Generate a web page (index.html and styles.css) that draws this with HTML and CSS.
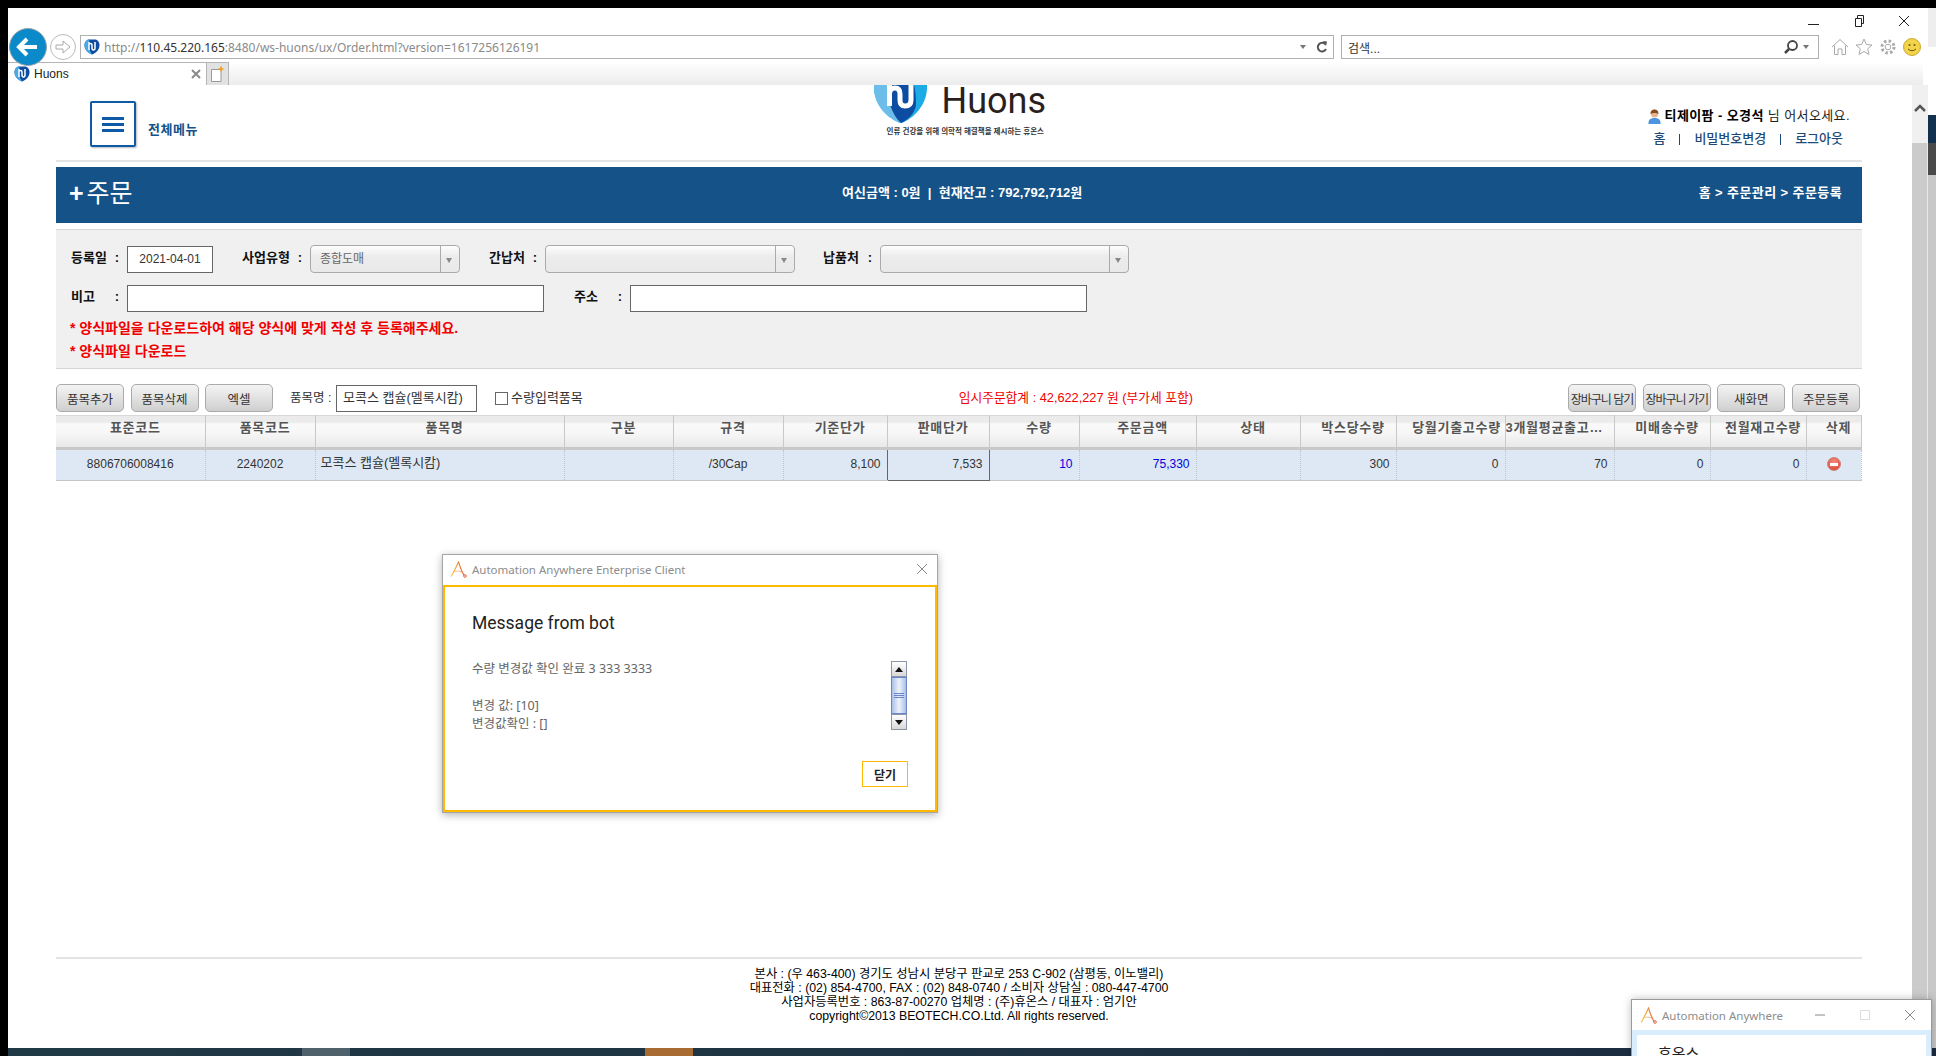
FILE: index.html
```html
<!DOCTYPE html>
<html lang="ko">
<head>
    <meta charset="UTF-8">
    <title>Huons</title>
    <link rel="stylesheet" href="styles.css">
</head>
<body>
<div class="browser">
    <div class="chrome">
        <div class="win-row">
            <svg class="win-btn" width="14" height="14" viewBox="0 0 14 14"><path d="M1 10.5H12" stroke="#222" fill="none"/></svg>
            <svg class="win-btn" width="14" height="14" viewBox="0 0 14 14"><path d="M3.5 4.5H9.5V12.5H3.5ZM5.5 4.5V1.5H11.5V9.5H9.5" stroke="#222" fill="none"/></svg>
            <svg class="win-btn" width="14" height="14" viewBox="0 0 14 14"><path d="M2 2L12 12M12 2L2 12" stroke="#222" fill="none"/></svg>
        </div>
        <div class="addr-row">
            <svg class="back" width="38" height="38" viewBox="0 0 38 38"><circle cx="19" cy="19" r="18.5" fill="#0b8ac9" stroke="#9aa5ab"/><path d="M28 19H11M18 11L10 19L18 27" stroke="#fff" stroke-width="4" fill="none"/></svg>
            <svg class="forward" width="26" height="26" viewBox="0 0 26 26"><circle cx="13" cy="13" r="12.5" fill="#fff" stroke="#bbb"/><path d="M6 11H13V7L20 13L13 19V15H6Z" fill="none" stroke="#aaa"/></svg>
            <div class="addr-box">
                <svg class="favicon" width="16" height="16" viewBox="0 0 16 16"><path d="M8 15.5C3 13.5 .5 10 .5 6C.5 2.5 3 .5 5.5 .5H10.5C13 .5 15.5 2.5 15.5 6C15.5 10 13 13.5 8 15.5Z" fill="#0c4da2"/><path d="M.5 6C.5 10 3 13.5 8 15.5C5 11 4 6 5.5 .5C3 .5 .5 2.5 .5 6Z" fill="#4aa9e6"/><path d="M5 3V11M5 6Q5 4.5 6.5 4.5Q8 4.5 8 6V9Q8 11 9.5 11Q11 11 11 9V3" stroke="#fff" stroke-width="1.5" fill="none"/></svg>
                <span class="url"><span class="url-dim">http://</span>110.45.220.165<span class="url-dim">:8480/ws-huons/ux/Order.html?version=1617256126191</span></span>
                <span class="drop-arrow"></span>
                <svg class="refresh" width="12" height="14" viewBox="0 0 12 14"><path d="M9.5 4.5A4.3 4.3 0 1 0 10 9" stroke="#555" stroke-width="2" fill="none"/><path d="M7 1L11 1.5L10 6Z" fill="#555"/></svg>
            </div>
            <div class="search-box">
                <span class="search-text">검색...</span>
                <svg width="16" height="16" viewBox="0 0 16 16"><circle cx="9.5" cy="6.5" r="4.5" fill="none" stroke="#444" stroke-width="1.8"/><path d="M6 10L2 14" stroke="#444" stroke-width="2.5"/></svg>
                <span class="drop-arrow"></span>
            </div>
            <div class="tool-icons">
                <svg width="18" height="18" viewBox="0 0 18 18"><path d="M1 9L9 1.5L17 9M3.5 7.5V16.5H7V11H11V16.5H14.5V7.5" fill="none" stroke="#a9a9a9"/></svg>
                <svg width="18" height="18" viewBox="0 0 18 18"><path d="M9 1L11.3 6.5L17 7L12.7 10.8L14 16.5L9 13.5L4 16.5L5.3 10.8L1 7L6.7 6.5Z" fill="none" stroke="#a9a9a9"/></svg>
                <svg width="18" height="18" viewBox="0 0 18 18"><circle cx="9" cy="9" r="2.8" fill="none" stroke="#a9a9a9"/><circle cx="9" cy="9" r="6" fill="none" stroke="#a9a9a9" stroke-width="3" stroke-dasharray="2.4 2.3"/></svg>
                <svg width="18" height="18" viewBox="0 0 18 18"><circle cx="9" cy="9" r="8.5" fill="#f3d34a" stroke="#c9a92e"/><circle cx="6.5" cy="7" r="1" fill="#6d5a14"/><circle cx="11.5" cy="7" r="1" fill="#6d5a14"/><path d="M5 11Q9 14.5 13 11" stroke="#6d5a14" fill="none"/></svg>
            </div>
        </div>
        <div class="tab-row">
            <div class="tab">
                <svg class="tab-icon" width="16" height="16" viewBox="0 0 16 16"><path d="M8 15.5C3 13.5 .5 10 .5 6C.5 2.5 3 .5 5.5 .5H10.5C13 .5 15.5 2.5 15.5 6C15.5 10 13 13.5 8 15.5Z" fill="#0c4da2"/><path d="M.5 6C.5 10 3 13.5 8 15.5C5 11 4 6 5.5 .5C3 .5 .5 2.5 .5 6Z" fill="#4aa9e6"/><path d="M5 3V11M5 6Q5 4.5 6.5 4.5Q8 4.5 8 6V9Q8 11 9.5 11Q11 11 11 9V3" stroke="#fff" stroke-width="1.5" fill="none"/></svg>
                <span class="tab-title">Huons</span>
                <svg width="10" height="10" viewBox="0 0 10 10"><path d="M1 1L9 9M9 1L1 9" stroke="#8a8a8a" stroke-width="2"/></svg>
            </div>
            <div class="new-tab">
                <svg width="16" height="18" viewBox="0 0 16 18"><path d="M1.5 4.5H11V16.5H1.5Z" fill="#fff" stroke="#9a9a9a"/><path d="M11 .5L12 3L14.5 4L12 5L11 7.5L10 5L7.5 4L10 3Z" fill="#f0a020"/></svg>
            </div>
            <div class="tab-rest"></div>
        </div>
    </div>

    <div class="viewport">
        <div class="page">
            <div class="page-body">
                <div class="top-header">
                    <div class="menu-area">
                        <div class="menu-box"><i></i><i></i><i></i></div>
                        <span class="menu-label">전체메뉴</span>
                    </div>
                    <div class="logo">
                        <div class="logo-top">
                            <svg width="53" height="38" viewBox="0 0 53 38">
                                <path d="M0 0C-1 18 12 33 27 38C41 33 54 18 53 0Z" fill="#1cabe5"/>
                                <path d="M0 0C-1 18 12 33 27 38C20 30 14 16 13 0Z" fill="#6cbdea"/>
                                <path d="M13 0C13 14 18 30 27 38C34 35 41 28 42 20C42 10 41 4 40 0Z" fill="#0c4da2"/>
                                <path d="M15.5 0V21M15.5 9Q15.5 3 21 3Q26 3 26 9V15Q26 21 31 21Q37 21 37 15V0" stroke="#fff" stroke-width="5" fill="none"/>
                            </svg>
                            <span class="logo-word">Huons</span>
                        </div>
                        <div class="logo-tag">인류 건강을 위해 의학적 해결책을 제시하는 휴온스</div>
                    </div>
                    <div class="user-area">
                        <div class="user-line">
                            <svg width="15" height="15" viewBox="0 0 15 15"><path d="M1.5 15C1 10.5 4 9 7.5 9C11 9 14 10.5 13.5 15Z" fill="#4f94e0"/><circle cx="7.5" cy="5" r="3.5" fill="#e8b48c"/><path d="M3.5 5C3.5 1.5 5.5 .5 7.5 .5C9.5 .5 11.5 1.5 11.5 5C10 3.5 5 3.5 3.5 5Z" fill="#8a4a22"/></svg>
                            <span><b>티제이팜 - 오경석</b> 님 어서오세요.</span>
                        </div>
                        <div class="user-links"><a>홈</a><s></s><a>비밀번호변경</a><s></s><a>로그아웃</a></div>
                    </div>
                </div>

                <div class="title-band">
                    <h1 class="band-title"><span class="band-plus">+</span>주문</h1>
                    <div class="band-info">여신금액 : 0원 &nbsp;|&nbsp; 현재잔고 : 792,792,712원</div>
                    <div class="band-crumb">홈 &gt; 주문관리 &gt; 주문등록</div>
                </div>

                <div class="search-panel">
                    <div class="form-row">
                        <label class="field-label"><span>등록일</span><span>:</span></label>
                        <div class="text-input date-input">2021-04-01</div>
                        <label class="field-label label-wide gap-l"><span>사업유형</span><span>:</span></label>
                        <div class="combo combo-s"><span>종합도매</span><em></em></div>
                        <label class="field-label gap-l"><span>간납처</span><span>:</span></label>
                        <div class="combo combo-m"><span></span><em></em></div>
                        <label class="field-label label-n gap-n"><span>납품처</span><span>:</span></label>
                        <div class="combo combo-m combo-l"><span></span><em></em></div>
                    </div>
                    <div class="form-row row-two">
                        <label class="field-label"><span>비고</span><span>:</span></label>
                        <div class="text-input memo-input"></div>
                        <label class="field-label gap-addr"><span>주소</span><span>:</span></label>
                        <div class="text-input addr-input"></div>
                    </div>
                    <p class="notice notice-first">* 양식파일을 다운로드하여 해당 양식에 맞게 작성 후 등록해주세요.</p>
                    <p class="notice">* 양식파일 다운로드</p>
                </div>

                <div class="toolbar">
                    <button class="btn">품목추가</button>
                    <button class="btn">품목삭제</button>
                    <button class="btn">엑셀</button>
                    <span class="item-label">품목명 :</span>
                    <div class="text-input item-input">모콕스 캡슐(멜록시캄)</div>
                    <span class="check-box"></span>
                    <span class="check-label">수량입력품목</span>
                    <span class="order-total">임시주문합계 : 42,622,227 원 (부가세 포함)</span>
                    <div class="btn-group">
                        <button class="btn btn-narrow">장바구니 담기</button>
                        <button class="btn btn-narrow">장바구니 가기</button>
                        <button class="btn">새화면</button>
                        <button class="btn">주문등록</button>
                    </div>
                </div>

                <table class="grid">
                    <colgroup>
                        <col class="c149"><col class="c110"><col class="c249"><col class="c109"><col class="c110"><col class="c104"><col class="c102"><col class="c90"><col class="c117"><col class="c104"><col class="c96"><col class="c109"><col class="c109"><col class="c96"><col class="c96"><col class="c55">
                    </colgroup>
                    <thead>
                    <tr>
                        <th>표준코드</th><th>품목코드</th><th>품목명</th><th>구분</th><th>규격</th><th>기준단가</th><th>판매단가</th><th>수량</th><th>주문금액</th><th>상태</th><th>박스당수량</th><th class="th-tight">당월기출고수량</th><th class="th-clip">3개월평균출고수량</th><th>미배송수량</th><th>전월재고수량</th><th>삭제</th>
                    </tr>
                    </thead>
                    <tbody>
                    <tr>
                        <td class="mid">8806706008416</td>
                        <td class="mid">2240202</td>
                        <td class="left">모콕스 캡슐(멜록시캄)</td>
                        <td></td>
                        <td class="mid">/30Cap</td>
                        <td class="num">8,100</td>
                        <td class="num cell-focus">7,533</td>
                        <td class="num blue">10</td>
                        <td class="num blue">75,330</td>
                        <td></td>
                        <td class="num">300</td>
                        <td class="num">0</td>
                        <td class="num">70</td>
                        <td class="num">0</td>
                        <td class="num">0</td>
                        <td class="mid"><span class="del-icon"></span></td>
                    </tr>
                    </tbody>
                </table>

                <div class="footer">
                    본사 : (우 463-400) 경기도 성남시 분당구 판교로 253 C-902 (삼평동, 이노밸리)<br>
                    대표전화 : (02) 854-4700, FAX : (02) 848-0740 / 소비자 상담실 : 080-447-4700<br>
                    사업자등록번호 : 863-87-00270 업체명 : (주)휴온스 / 대표자 : 엄기안<br>
                    copyright©2013 BEOTECH.CO.Ltd. All rights reserved.
                </div>
            </div>
            <div class="taskbar"><span class="task-a"></span><span class="task-b"></span></div>
        </div>
        <div class="scrollbar">
            <div class="scroll-top">
                <svg width="14" height="10" viewBox="0 0 14 10"><path d="M2 8L7 3L12 8" stroke="#555" stroke-width="2.5" fill="none"/></svg>
            </div>
            <div class="scroll-thumb"></div>
        </div>
    </div>
</div>
<div class="edge"><i class="e1"></i><i class="e2"></i><i class="e3"></i><i class="e4"></i><i class="e5"></i><i class="e6"></i></div>

<!-- message window -->
<div class="dialog">
    <div class="dialog-title">
        <svg class="aa-icon" width="17" height="17" viewBox="0 0 17 17"><defs><linearGradient id="aa1" x1="0" x2="1"><stop offset="0" stop-color="#f8c850"/><stop offset="1" stop-color="#e2683f"/></linearGradient></defs><path d="M1 15.5Q5 9 8.5 1Q10.5 8 14 14.5" fill="none" stroke="url(#aa1)" stroke-width="1.2"/><path d="M3 11Q8 9 12 11" fill="none" stroke="url(#aa1)" stroke-width=".6"/><circle cx="15" cy="15" r="1.3" fill="none" stroke="#e2683f"/></svg>
        <span class="dialog-name">Automation Anywhere Enterprise Client</span>
        <svg width="12" height="12" viewBox="0 0 12 12"><path d="M1 1L11 11M11 1L1 11" stroke="#888" fill="none"/></svg>
    </div>
    <div class="dialog-body">
        <h2 class="dialog-head">Message from bot</h2>
        <div class="msg-row">
            <div class="msg-text">수량 변경값 확인 완료 3 333 3333<br><br>변경 값: [10]<br>변경값확인 : []</div>
            <div class="msg-scroll">
                <span class="sb-btn"><i class="tri-up"></i></span>
                <span class="sb-thumb"><i></i><i></i><i></i></span>
                <span class="sb-btn"><i class="tri-down"></i></span>
            </div>
        </div>
        <button class="dialog-close">닫기</button>
    </div>
</div>

<div class="mini-win">
    <div class="mini-title">
        <svg class="aa-icon" width="17" height="17" viewBox="0 0 17 17"><path d="M1 15.5Q5 9 8.5 1Q10.5 8 14 14.5" fill="none" stroke="url(#aa1)" stroke-width="1.2"/><path d="M3 11Q8 9 12 11" fill="none" stroke="url(#aa1)" stroke-width=".6"/><circle cx="15" cy="15" r="1.3" fill="none" stroke="#e2683f"/></svg>
        <span class="mini-name">Automation Anywhere</span>
        <svg class="mini-min" width="12" height="12" viewBox="0 0 12 12"><path d="M1 6H11" stroke="#888"/></svg>
        <svg class="mini-max" width="12" height="12" viewBox="0 0 12 12"><path d="M1.5 1.5H10.5V10.5H1.5Z" stroke="#ddd" fill="none"/></svg>
        <svg class="mini-x" width="12" height="12" viewBox="0 0 12 12"><path d="M1 1L11 11M11 1L1 11" stroke="#888" fill="none"/></svg>
    </div>
    <div class="mini-body">휴온스</div>
</div>
</body>
</html>
```

FILE: styles.css
```css
*{
    margin: 0;
    padding: 0;
    box-sizing: border-box;
}
html,body{
    width: 1936px;
    height: 1056px;
    overflow: hidden;
}
body{
    display: flex;
    align-items: flex-start;
    padding: 8px 0 0 8px;
    background-color: #000;
    font-family: "Liberation Sans", "Noto Sans CJK KR", sans-serif;
    font-size: 12px;
    color: #333;
}
.browser{
    display: flex;
    flex-direction: column;
    width: 1920px;
    height: 1048px;
    background-color: #fff;
}

/* browser chrome */
.chrome{
    height: 77px;
    flex: none;
}
.win-row{
    display: flex;
    justify-content: flex-end;
    gap: 31px;
    height: 27px;
    padding: 6px 17px 0 0;
}
.addr-row{
    display: flex;
    align-items: center;
    height: 24px;
    padding-left: 1px;
}
.back{
    flex: none;
    position: relative;
    z-index: 2;
}
.forward{
    flex: none;
    margin-left: 3px;
}
.addr-box{
    display: flex;
    align-items: center;
    width: 1254px;
    height: 24px;
    margin-left: 4px;
    padding: 0 5px 0 3px;
    border: 1px solid #b0b0b0;
}
.url{
    flex: 1;
    margin-left: 4px;
    font-family: "Noto Sans", sans-serif;
    font-size: 12px;
    color: #333;
}
.url-dim{
    color: #8a8a8a;
}
.drop-arrow{
    width: 0;
    height: 0;
    border-left: 3px solid transparent;
    border-right: 3px solid transparent;
    border-top: 4px solid #777;
}
.refresh{
    margin-left: 10px;
}
.search-box{
    display: flex;
    align-items: center;
    gap: 4px;
    width: 478px;
    height: 24px;
    margin-left: 7px;
    padding: 0 9px 0 6px;
    border: 1px solid #b0b0b0;
}
.search-text{
    flex: 1;
    color: #333;
}
.tool-icons{
    display: flex;
    gap: 6px;
    margin-left: 12px;
}
.tab-row{
    display: flex;
    height: 23px;
    margin-top: 3px;
}
.tab{
    display: flex;
    align-items: center;
    width: 199px;
    padding: 0 5px 0 6px;
    border-top: 1px solid #b5b5b5;
    border-right: 1px solid #b5b5b5;
    background-color: #fff;
}
.tab-icon{
    flex: none;
}
.tab-title{
    flex: 1;
    margin-left: 4px;
    color: #222;
}
.new-tab{
    display: flex;
    align-items: center;
    justify-content: center;
    width: 22px;
    background-color: #e2e2e2;
    border-top: 1px solid #b5b5b5;
    border-right: 1px solid #b5b5b5;
}
.tab-rest{
    flex: 1;
    margin-right: 5px;
    background: linear-gradient(#fff, #ececec);
}

/* page */
.viewport{
    display: flex;
    flex: 1;
    min-height: 0;
}
.page{
    display: flex;
    flex-direction: column;
    flex: 1;
    min-width: 0;
}
.page-body{
    display: flex;
    flex-direction: column;
    flex: 1;
    margin: 0 50px 0 48px;
    min-height: 0;
}
.top-header{
    display: grid;
    grid-template-columns: 1fr auto 1fr;
    flex: none;
    height: 77px;
    border-bottom: 2px solid #e4e4e4;
    overflow: hidden;
}
.menu-area{
    display: flex;
    align-items: flex-start;
    padding: 16px 0 0 34px;
}
.menu-box{
    display: flex;
    flex-direction: column;
    align-items: center;
    gap: 3px;
    width: 46px;
    height: 46px;
    padding-top: 14px;
    border: 2px solid #0d5aa7;
    border-radius: 2px;
    box-shadow: 1px 1px 2px #bbb;
}
.menu-box i{
    display: block;
    width: 22px;
    height: 3px;
    background-color: #0d5aa7;
}
.menu-label{
    margin: 20px 0 0 12px;
    font-size: 13px;
    font-weight: bold;
    line-height: 18px;
    letter-spacing: .5px;
    color: #15528a;
}
.logo{
    width: 170px;
}
.logo-top{
    display: flex;
    justify-content: space-between;
    height: 38px;
}
.logo-word{
    height: 28px;
    margin: 2px -2px 0 0;
    font-family: Roboto, sans-serif;
    font-size: 36px;
    line-height: 28px;
    color: #2a1f1f;
}
.logo-tag{
    margin-top: 2px;
    font-size: 7.5px;
    font-weight: bold;
    text-align: right;
    white-space: nowrap;
    color: #333;
}
.user-area{
    display: flex;
    flex-direction: column;
    align-items: flex-end;
    padding: 22px 12px 0 0;
}
.user-line{
    display: flex;
    align-items: center;
    gap: 3px;
    height: 18px;
    font-size: 13px;
    line-height: 18px;
    letter-spacing: .4px;
    color: #222;
}
.user-line b{
    color: #000;
}
.user-links{
    display: flex;
    align-items: center;
    height: 18px;
    margin-top: 5px;
    padding-right: 7px;
    font-size: 13px;
    font-weight: 500;
    line-height: 18px;
    color: #1d4a7a;
}
.user-links s{
    width: 1px;
    height: 11px;
    margin: 0 14px;
    background-color: #1d4a7a;
}
.title-band{
    display: flex;
    align-items: center;
    flex: none;
    height: 56px;
    margin-top: 5px;
    padding: 0 20px 8px 13px;
    background-color: #155287;
    color: #fff;
}
.band-title{
    width: 773px;
    margin-top: 4px;
    font-size: 25px;
    font-weight: normal;
    line-height: 30px;
}
.band-plus{
    margin-right: 3px;
    font-weight: bold;
}
.band-info{
    flex: 1;
    font-size: 13px;
    font-weight: bold;
}
.band-crumb{
    font-size: 13px;
    font-weight: bold;
    letter-spacing: .4px;
}
.search-panel{
    flex: none;
    height: 140px;
    margin-top: 6px;
    padding: 15px 0 0 15px;
    background-color: #f0f0f0;
    border-top: 1px solid #d5d5d5;
    border-bottom: 1px solid #d5d5d5;
}
.form-row{
    display: flex;
    align-items: center;
    height: 28px;
}
.row-two{
    margin-top: 11px;
}
.field-label{
    display: flex;
    justify-content: space-between;
    flex: none;
    width: 56px;
    padding: 0 8px 2px 0;
    font-size: 13px;
    font-weight: bold;
    line-height: 16px;
    color: #111;
}
.label-wide{
    width: 68px;
}
.label-n{
    width: 57px;
}
.gap-l{
    margin-left: 29px;
}
.gap-n{
    margin-left: 28px;
}
.gap-addr{
    margin-left: 30px;
}
.text-input{
    display: flex;
    align-items: center;
    height: 27px;
    background-color: #fff;
    border: 1px solid #666;
    color: #333;
}
.date-input{
    width: 86px;
    justify-content: center;
}
.memo-input{
    width: 417px;
}
.addr-input{
    width: 457px;
}
.combo{
    display: flex;
    height: 28px;
    border: 1px solid #aaa;
    border-radius: 4px;
    background: linear-gradient(#fdfdfd, #ececec 40%, #e9e9e9);
    color: #666;
}
.combo span{
    flex: 1;
    padding-left: 9px;
    line-height: 26px;
}
.combo em{
    position: relative;
    width: 19px;
    border-left: 1px solid #aaa;
}
.combo em::after{
    content: "";
    position: absolute;
    left: 5px;
    top: 12px;
    border-left: 3px solid transparent;
    border-right: 3px solid transparent;
    border-top: 5px solid #888;
}
.combo-s{
    width: 150px;
}
.combo-m{
    width: 250px;
}
.combo-l{
    width: 249px;
}
.notice{
    height: 23px;
    font-size: 14px;
    font-weight: bold;
    line-height: 23px;
    color: #f00000;
    margin-left: -1px;
}
.notice-first{
    margin-top: 5px;
}
.toolbar{
    display: flex;
    align-items: center;
    flex: none;
    height: 28px;
    margin-top: 15px;
    padding-right: 2px;
}
.btn{
    width: 68px;
    height: 28px;
    padding: 0;
    border: 1px solid #aaa;
    border-radius: 5px;
    background: linear-gradient(#f4f4f4, #cfcfcf);
    font-family: inherit;
    font-size: 12.5px;
    color: #333;
    white-space: nowrap;
    overflow: hidden;
}
.btn-narrow{
    font-size: 12px;
    letter-spacing: -1px;
}
.toolbar > .btn + .btn{
    margin-left: 6.5px;
}
.item-label{
    margin-left: 17px;
    width: 46px;
    font-size: 12.5px;
    line-height: 18px;
    color: #333;
}
.item-input{
    width: 141px;
    height: 27px;
    padding-left: 6px;
    font-size: 13px;
    line-height: 18px;
}
.check-box{
    width: 13px;
    height: 13px;
    margin-left: 18px;
    background-color: #fff;
    border: 1px solid #666;
}
.check-label{
    margin-left: 3px;
    font-size: 13px;
    line-height: 18px;
}
.order-total{
    margin-left: auto;
    margin-right: 375px;
    font-size: 12.75px;
    line-height: 18px;
    color: #f00000;
}
.btn-group{
    display: flex;
    gap: 6.67px;
}
.grid{
    flex: none;
    width: 1805px;
    margin-top: 3px;
    table-layout: fixed;
    border-collapse: collapse;
}
.c149{width: 149px;}
.c110{width: 110px;}
.c249{width: 249px;}
.c109{width: 109px;}
.c104{width: 104px;}
.c102{width: 102px;}
.c90{width: 90px;}
.c117{width: 117px;}
.c96{width: 96px;}
.c55{width: 55px;}
.grid th{
    height: 33px;
    padding: 0 0 7px 10px;
    background: linear-gradient(#ebebeb 0, #ebebeb 6px, #f9f9f9 7px, #f7f7f7 16px, #e8e8e8 31px);
    border-top: 1px solid #d8d8d8;
    border-right: 1px solid #c8c8c8;
    border-bottom: 3px solid #c8c8c8;
    font-size: 13px;
    font-weight: bold;
    line-height: 18px;
    letter-spacing: .7px;
    color: #555;
    white-space: nowrap;
}
.grid th.th-tight{
    padding-left: 12px;
}
.grid th.th-clip{
    padding-left: 0;
    padding-right: 6px;
    overflow: hidden;
    text-overflow: ellipsis;
    text-align: left;
}
.grid td{
    height: 32px;
    padding-bottom: 3px;
    background-color: #dee8f4;
    border-right: 1px dotted #bcc6d2;
    border-bottom: 1px solid #c5c5c5;
    line-height: 18px;
    white-space: nowrap;
    color: #333;
}
.grid td.mid{
    text-align: center;
}
.grid td.left{
    padding-left: 5px;
    padding-bottom: 5px;
    font-size: 13px;
}
.grid td.num{
    padding-right: 6px;
    text-align: right;
}
.grid td.blue{
    color: #0000e0;
}
.grid td.cell-focus{
    border: 1px solid #666;
}
.del-icon{
    display: inline-block;
    position: relative;
    width: 14px;
    height: 14px;
    vertical-align: middle;
    border-radius: 50%;
    background: radial-gradient(circle at 50% 30%, #f58a7c, #d8402f);
    border: 1px solid #c9897f;
}
.del-icon::after{
    content: "";
    position: absolute;
    left: 2px;
    right: 2px;
    top: 4.5px;
    height: 3px;
    background-color: #fff;
}
.footer{
    flex: none;
    height: 91px;
    margin-top: auto;
    padding-top: 8px;
    border-top: 2px solid #e4e4e4;
    font-size: 12.3px;
    line-height: 14px;
    text-align: center;
    color: #000;
}
.taskbar{
    display: flex;
    flex: none;
    height: 8px;
    background: linear-gradient(90deg, #203a45, #1a2a40);
}
.task-a{
    width: 48px;
    margin-left: 294px;
    background-color: #4f626b;
}
.task-b{
    width: 48px;
    margin-left: 295px;
    background-color: #a86c33;
}
.scrollbar{
    display: flex;
    flex-direction: column;
    flex: none;
    width: 16px;
}
.scroll-top{
    height: 58px;
    padding: 18px 0 0 1px;
    background-color: #f0f0f0;
}
.scroll-top svg{
    display: block;
}
.scroll-thumb{
    flex: 1;
    background-color: #cbcbcb;
    border-right: 1px solid #e8e8e8;
}
.edge{
    display: flex;
    flex-direction: column;
    flex: none;
    width: 8px;
    height: 1048px;
}
.edge i{
    display: block;
}
.e1{height: 39px; background-color: #eeeeee;}
.e2{height: 68px; background-color: #fff;}
.e3{height: 28px; background-color: #14304f;}
.e4{height: 32px; background-color: #4a4a4a;}
.e5{height: 873px; background-color: #c8c8c8;}
.e6{height: 8px; background-color: #1a2a40;}

/* floating windows */
.dialog{
    position: absolute;
    left: 442px;
    top: 554px;
    display: flex;
    flex-direction: column;
    width: 496px;
    height: 259px;
    background-color: #fff;
    border: 1px solid #a5a5a5;
    box-shadow: 0 2px 8px rgba(0,0,0,.3);
}
.dialog-title{
    display: flex;
    align-items: center;
    flex: none;
    height: 30px;
    padding: 0 9px 2px 7px;
}
.dialog-name{
    flex: 1;
    margin-left: 5px;
    font-family: "Noto Sans", sans-serif;
    font-size: 11.5px;
    color: #8c8c8c;
}
.dialog-body{
    display: flex;
    flex-direction: column;
    flex: 1;
    padding: 24px 27px 0 27px;
    border: 2px solid #ffb900;
}
.dialog-head{
    height: 24px;
    font-family: Roboto, sans-serif;
    font-size: 17.5px;
    font-weight: normal;
    line-height: 24px;
    color: #222;
}
.msg-row{
    display: flex;
    justify-content: space-between;
    height: 69px;
    margin-top: 26px;
    padding-right: 1px;
}
.msg-text{
    margin-top: -1px;
    font-family: "Noto Sans", "Noto Sans CJK KR", sans-serif;
    font-size: 12.5px;
    line-height: 18.3px;
    color: #666;
}
.msg-scroll{
    display: flex;
    flex-direction: column;
    width: 16px;
    height: 69px;
}
.sb-btn{
    display: flex;
    align-items: center;
    justify-content: center;
    height: 16px;
    background: linear-gradient(#fff, #d8d8d8);
    border: 1px solid #8a96a8;
}
.tri-up{
    border-left: 4px solid transparent;
    border-right: 4px solid transparent;
    border-bottom: 5px solid #111;
}
.tri-down{
    border-left: 4px solid transparent;
    border-right: 4px solid transparent;
    border-top: 5px solid #111;
}
.sb-thumb{
    display: flex;
    flex-direction: column;
    align-items: center;
    justify-content: center;
    gap: 1px;
    flex: 1;
    background: linear-gradient(90deg, #a8c0e8, #eef3fb 50%, #a8c0e8);
    border: 1px solid #6a86c8;
}
.sb-thumb i{
    display: block;
    width: 10px;
    height: 1px;
    background-color: #6a86c8;
}
.dialog-close{
    align-self: flex-end;
    width: 46px;
    height: 26px;
    margin-top: 31px;
    background-color: #fff;
    border: 1px solid #ffb900;
    font-family: inherit;
    font-size: 12px;
    font-weight: bold;
    color: #222;
}
.mini-win{
    position: absolute;
    left: 1631px;
    top: 999px;
    width: 301px;
    height: 57px;
    overflow: hidden;
    background-color: #fff;
    border: 1px solid #9a9a9a;
    border-bottom: none;
    box-shadow: 0 0 8px rgba(0,0,0,.25);
}
.mini-title{
    display: flex;
    align-items: center;
    height: 30px;
    padding-left: 8px;
}
.mini-name{
    width: 152px;
    margin-left: 5px;
    font-family: "Noto Sans", sans-serif;
    font-size: 11.5px;
    color: #8c8c8c;
}
.mini-max{
    margin-left: 33px;
}
.mini-x{
    margin-left: 33px;
}
.mini-body{
    height: 26px;
    padding: 8px 0 0 21px;
    border: 5px solid #d9edfc;
    border-bottom: none;
    font-family: "Noto Sans CJK KR", sans-serif;
    font-size: 15px;
    line-height: 20px;
    color: #222;
}
```
